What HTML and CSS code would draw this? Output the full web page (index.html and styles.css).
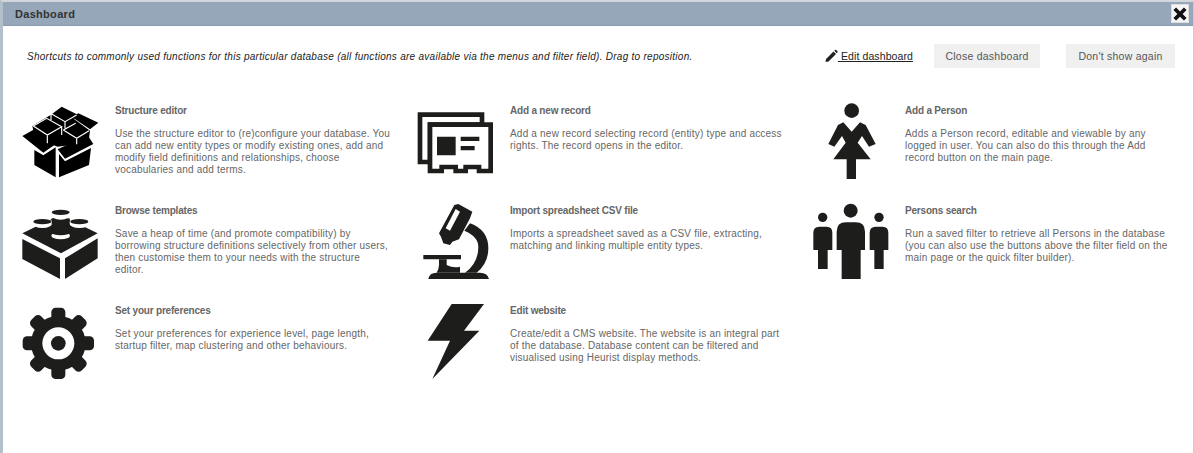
FILE: index.html
```html
<!DOCTYPE html>
<html>
<head>
<meta charset="utf-8">
<title>Dashboard</title>
<link rel="stylesheet" href="styles.css">
</head>
<body>
<div class="dialog">
  <div class="titlebar">
    <span class="title">Dashboard</span>
    <button class="close-x" aria-label="Close">
      <svg width="14" height="14" viewBox="0 0 16 16"><path d="M3.500.5 8 5 12.500.5 15.500 3.500 11 8 15.500 12.500 12.500 15.500 8 11 3.500 15.500.5 12.500 5 8 .5 3.500Z" fill="#111"/></svg>
    </button>
  </div>
  <div class="toolbar">
    <p class="intro">Shortcuts to commonly used functions for this particular database (all functions are available via the menus and filter field). Drag to reposition.</p>
    <a class="edit-link" href="#">
      <svg class="pencil" width="13" height="14" viewBox="0 0 13 13"><path d="M1 9.500 8.500 2 11 4.500 3.500 12 .5 12.500ZM9.300 1.200 10 .5Q10.800 0 11.500.7L12.300 1.500Q13 2.300 12.500 3L11.800 3.700Z" fill="#222"/></svg>
      <span>&nbsp;Edit dashboard</span>
    </a>
    <button class="btn btn-close">Close dashboard</button>
    <button class="btn btn-hide">Don't show again</button>
  </div>
  <div class="shortcuts">

    <div class="shortcut">
      <svg class="icon" viewBox="60 309 240 240">
        <g transform="translate(45 300)">
          <path d="M22 108 58 88 118 135 85 158ZM190 40 250 68 225 88 172 52ZM58 150 85 166 122 142V232L58 195ZM132 162 150 184 228 144 222 195 132 232ZM128 148 218 106 235 132 150 176Z" fill="#000"/>
          <path d="M52 78 108 44 140 20 190 45 176 56 225 92 222 115 190 132 128 140 100 130 58 105Z" fill="#000"/>
          <path d="M110 42 150 65 185 45M150 65V85M108 42V60M55 78 97 105 140 80 95 55ZM97 105V130M145 90 185 115 222 92M185 115V133M145 90 182 70M140 80V105" fill="none" stroke="#fff" stroke-width="3.500"/>
        </g>
      </svg>
      <div class="text">
        <h3>Structure editor</h3>
        <p>Use the structure editor to (re)configure your database. You can add new entity types or modify existing ones, add and modify field definitions and relationships, choose vocabularies and add terms.</p>
      </div>
    </div>

    <div class="shortcut">
      <svg class="icon" viewBox="45 39 240 240">
        <path d="M60 74H246V104H90V216H60Z" fill="#fff" stroke="#1d1d1b" stroke-width="14"/>
        <path d="M90 104H272V243H237V231H197V243H167V231H125V243H90Z" fill="#fff" stroke="#1d1d1b" stroke-width="14"/>
        <path d="M111 140H167V196H111ZM182 140H238V153H182ZM182 168H224V181H182Z" fill="#1d1d1b"/>
      </svg>
      <div class="text">
        <h3>Add a new record</h3>
        <p>Add a new record selecting record (entity) type and access rights. The record opens in the editor.</p>
      </div>
    </div>

    <div class="shortcut">
      <svg class="icon" viewBox="30 309 240 240">
        <circle cx="155" cy="332" r="22" fill="#1d1d1b"/>
        <path d="M130 367 155 395 180 367 197 375 227 432 207 440 186 408 173 428 212 478H168V537H140V478H100L137 428 126 408 103 440 85 432 114 375Z" fill="#1d1d1b"/>
      </svg>
      <div class="text text-narrow">
        <h3>Add a Person</h3>
        <p>Adds a Person record, editable and viewable by any logged in user. You can also do this through the Add record button on the main page.</p>
      </div>
    </div>

    <div class="shortcut">
      <svg class="icon" viewBox="60 39 240 240">
        <g fill="#1d1d1b">
          <path d="M67 130 180 75 293 130 183 190Z"/>
          <path d="M67 147 180 205V267L67 207ZM195 205 293 145V205L195 267Z"/>
          <ellipse cx="127" cy="98" rx="31" ry="16" fill="#fff"/>
          <ellipse cx="127" cy="95" rx="27" ry="8"/>
          <ellipse cx="238" cy="98" rx="31" ry="16" fill="#fff"/>
          <ellipse cx="238" cy="95" rx="27" ry="8"/>
          <ellipse cx="182" cy="137" rx="28" ry="11" fill="#fff"/>
          <rect x="155" y="85" width="54" height="43"/>
          <ellipse cx="182" cy="128" rx="27" ry="8"/>
          <ellipse cx="182" cy="72" rx="31" ry="17" fill="#fff"/>
          <ellipse cx="182" cy="67" rx="27" ry="8"/>
        </g>
      </svg>
      <div class="text">
        <h3>Browse templates</h3>
        <p>Save a heap of time (and promote compatibility) by borrowing structure definitions selectively from other users, then customise them to your needs with the structure editor.</p>
      </div>
    </div>

    <div class="shortcut">
      <svg class="icon" viewBox="45 339 240 240">
        <g fill="#1d1d1b">
          <path d="M163 345 175 342 217 365 210 385 177 448 157 455 150 465 130 460 123 440 117 430Z"/>
          <path d="M70 495H183V508H70Z"/>
          <path d="M117 508H140V525Q160 535 180 530V548H110Q117 535 117 525Z"/>
          <path d="M85 567Q88 548 110 548H240Q262 548 267 567Z"/>
          <path d="M210 400Q265 420 265 475 265 520 230 548H195Q235 520 235 470 235 440 193 422Z"/>
        </g>
        <path d="M167 357 180 365 150 422 137 415Z" fill="#fff"/>
      </svg>
      <div class="text">
        <h3>Import spreadsheet CSV file</h3>
        <p>Imports a spreadsheet saved as a CSV file, extracting, matching and linking multiple entity types.</p>
      </div>
    </div>

    <div class="shortcut">
      <svg class="icon" viewBox="30 39 240 240">
        <g fill="#1d1d1b">
          <circle cx="152" cy="62" r="21"/>
          <circle cx="68" cy="82" r="14"/>
          <circle cx="237" cy="82" r="14"/>
          <path d="M110 125Q110 97 138 97H167Q195 97 195 125V180H182V267H125V180H110Z"/>
          <path d="M40 128Q40 110 58 110H80Q97 110 97 128V180H83V237H54V180H40Z"/>
          <path d="M209 128Q209 110 227 110H248Q265 110 265 128V180H251V237H223V180H209Z"/>
        </g>
      </svg>
      <div class="text text-narrow">
        <h3>Persons search</h3>
        <p>Run a saved filter to retrieve all Persons in the database (you can also use the buttons above the filter field on the main page or the quick filter builder).</p>
      </div>
    </div>

    <div class="shortcut">
      <svg class="icon" viewBox="60 339 240 240">
        <g fill="#1d1d1b">
          <circle cx="175" cy="460" r="82"/>
          <rect x="154" y="353" width="42" height="214" rx="13"/>
          <rect x="154" y="353" width="42" height="214" rx="13" transform="rotate(45 175 460)"/>
          <rect x="154" y="353" width="42" height="214" rx="13" transform="rotate(90 175 460)"/>
          <rect x="154" y="353" width="42" height="214" rx="13" transform="rotate(135 175 460)"/>
        </g>
        <circle cx="175" cy="460" r="48" fill="#fff"/>
        <circle cx="175" cy="460" r="22" fill="#1d1d1b"/>
      </svg>
      <div class="text">
        <h3>Set your preferences</h3>
        <p>Set your preferences for experience level, page length, startup filter, map clustering and other behaviours.</p>
      </div>
    </div>

    <div class="shortcut">
      <svg class="icon" viewBox="45 639 240 240">
        <path d="M155 642H252L192 722H238L97 867 150 752H83Z" fill="#1d1d1b"/>
      </svg>
      <div class="text">
        <h3>Edit website</h3>
        <p>Create/edit a CMS website. The website is an integral part of the database. Database content can be filtered and visualised using Heurist display methods.</p>
      </div>
    </div>

  </div>
</div>
</body>
</html>
```

FILE: styles.css
```css
html, body {
  height: 100%;
  margin: 0;
  padding: 0;
}

body {
  background-color: #fff;
  font-family: "Liberation Sans", Arial, sans-serif;
  font-size: 11px;
  color: #555;
}

.dialog {
  box-sizing: border-box;
  height: 100%;
  border-top: 2px solid #d3d7db;
  border-left: 3px solid #b3c0cc;
  border-right: 1px solid #c8cdd2;
}

.titlebar {
  display: flex;
  align-items: center;
  justify-content: space-between;
  box-sizing: border-box;
  height: 24px;
  padding: 0 4px 0 12px;
  background-color: #95a7b8;
  border-bottom: 1px solid #8a9cad;
}

.title {
  font-size: 11px;
  font-weight: bold;
  letter-spacing: .3px;
  color: #333;
}

.close-x {
  display: flex;
  align-items: center;
  justify-content: center;
  width: 18px;
  height: 19px;
  padding: 0;
  background: #f5f5f5;
  border: 1px solid #ddd;
}

.toolbar {
  display: flex;
  align-items: center;
  height: 24px;
  margin-top: 18px;
  padding: 0 18px 0 24px;
}

.intro {
  flex: 1;
  margin: 0;
  font-size: 10px;
  font-style: italic;
  letter-spacing: .27px;
  color: #222;
}

.edit-link {
  display: flex;
  align-items: center;
  color: #222;
  font-size: 10.500px;
  letter-spacing: .1px;
  text-decoration: underline;
}

.btn {
  height: 24px;
  padding: 0;
  background: #f0f0f0;
  border: 0;
  font-family: inherit;
  font-size: 10.500px;
  letter-spacing: .25px;
  color: #555;
}

.btn-close {
  width: 106px;
  margin-left: 21px;
}

.btn-hide {
  width: 109px;
  margin-left: 26px;
}

.shortcuts {
  display: grid;
  grid-template-columns: repeat(3, 395px);
  grid-auto-rows: 100px;
  margin-top: 35px;
  margin-left: 17px;
}

.shortcut {
  display: flex;
}

.icon {
  flex: none;
  width: 80px;
  height: 80px;
  margin-right: 15px;
}

.text {
  width: 276px;
  padding-top: 2px;
}

.text-narrow {
  width: 270px;
}

.text h3 {
  margin: 0 0 11px;
  font-size: 10px;
  line-height: 12px;
  font-weight: bold;
  letter-spacing: -.2px;
  color: #666;
}

.text p {
  margin: 0;
  font-size: 10px;
  line-height: 12px;
  letter-spacing: .2px;
  color: #666;
}
```
